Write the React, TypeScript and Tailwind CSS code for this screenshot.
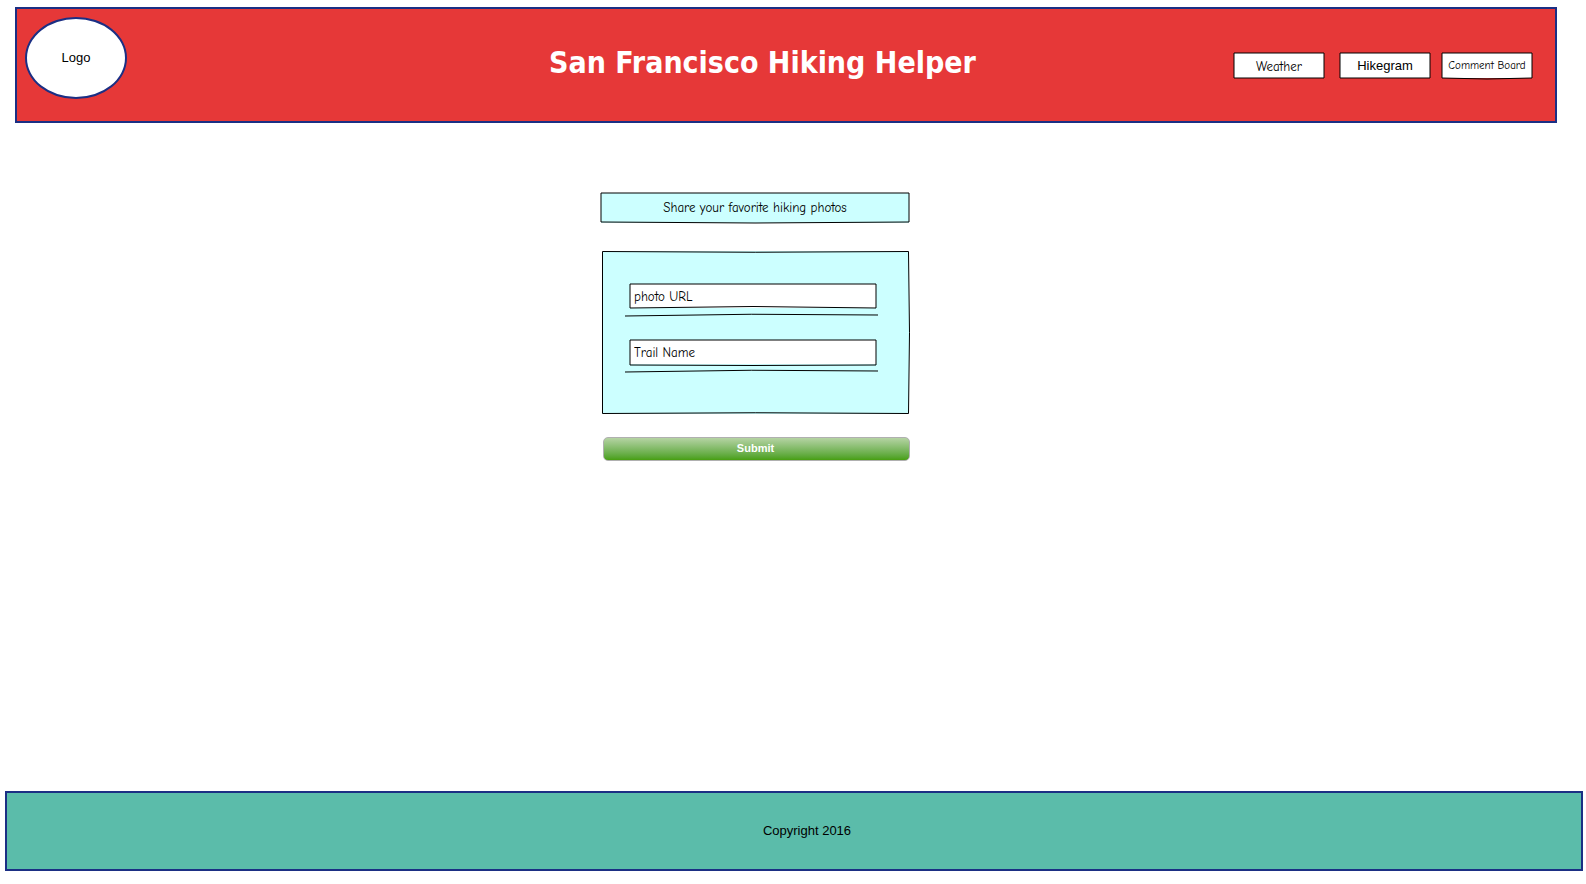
const INK = { fill: 'none', stroke: '#000', strokeWidth: 1, vectorEffect: 'non-scaling-stroke' as const };

/** Hand-drawn outline stretched over the nearest relative parent. */
function Sketch({ box, d }: { box: string; d: string }) {
  return (
    <svg
      className="pointer-events-none absolute inset-0 size-full overflow-visible"
      viewBox={box}
      preserveAspectRatio="none"
      aria-hidden="true"
    >
      <path d={d} strokeLinejoin="round" {...INK} />
    </svg>
  );
}

const comic = "font-['Comic_Sans_MS','Comic_Neue','Open_Sans',sans-serif]";

const links = [
  { label: 'Weather', style: `mr-1 pt-[2px] text-[13px] ${comic}`, d: 'M0 0H90V25H0Z' },
  { label: 'Hikegram', style: 'text-[13px]', d: 'M0 0H90V25H0Z' },
  { label: 'Comment Board', style: `pt-[2px] text-[11px] ${comic}`, d: 'M0 0H90V25Q45 27 0 25Z' },
];

const fields = [
  { id: 'photo-url', label: 'photo URL', d: 'M0 0H246V24Q123 21 0 24Z' },
  { id: 'trail-name', label: 'Trail Name', d: 'M0 0H246V25Q123 26 0 25Z' },
];

export default function App() {
  return (
    <div className="flex min-h-screen flex-col bg-white font-['Liberation_Sans',Arial,sans-serif] text-[13px] text-black">
      <header className="mt-[7px] mr-[29px] ml-[15px] flex items-start border-2 border-[#1b2f84] bg-[#e63838] pt-2 pr-[23px] pb-[22px] pl-2">
        <a
          href="#home"
          className="flex h-[82px] w-[102px] shrink-0 items-center justify-center rounded-[50%] border-2 border-[#1b2f84] bg-white"
        >
          Logo
        </a>
        <h1 className="mt-[26px] flex-1 pl-[164px] text-center font-['Tahoma','DejaVu_Sans_Condensed','DejaVu_Sans',sans-serif] text-[30px] leading-10 font-bold whitespace-nowrap text-white">
          San Francisco Hiking Helper
        </h1>
        <nav className="mt-9 flex shrink-0 gap-3">
          {links.map((link) => (
            <a
              key={link.label}
              href="#"
              className={`relative flex h-[25px] w-[90px] items-center justify-center bg-white whitespace-nowrap ${link.style}`}
            >
              {link.label}
              <Sketch box="0 0 90 25" d={link.d} />
            </a>
          ))}
        </nav>
      </header>

      <main className="flex flex-1 justify-center pt-[70px] pr-[76px] pb-10">
        <form className="w-[308px]" onSubmit={(event) => event.preventDefault()}>
          <h2 className={`relative flex h-[30px] items-center justify-center bg-[#ccffff] text-[13px] ${comic}`}>
            Share your favorite hiking photos
            <Sketch box="0 0 308 30" d="M0 0H308V29Q154 31 0 29Z" />
          </h2>

          <div className="relative mt-[28px] ml-px flex flex-col gap-6 bg-[#ccffff] px-[23px] pt-[33px] pb-[42px]">
            <Sketch box="0 0 307 163" d="M.5 .5Q153 2 306.5 .5Q308.5 82 306.5 162.5Q153 161 .5 162.5Z" />
            {fields.map((field) => (
              <div key={field.id}>
                <div className="relative mr-[10px] ml-[5px] h-6 bg-white">
                  <input
                    id={field.id}
                    type="text"
                    aria-label={field.label}
                    placeholder={field.label}
                    className={`block h-6 w-full bg-transparent px-1 text-[13px] outline-none placeholder:text-black placeholder:opacity-100 ${comic}`}
                  />
                  <Sketch box="0 0 246 24" d={field.d} />
                </div>
                <svg
                  className="mt-[6px] block h-[2px] w-[253px] overflow-visible"
                  viewBox="0 0 253 2"
                  preserveAspectRatio="none"
                  aria-hidden="true"
                >
                  <path d="M0 2Q126 -1 253 1" {...INK} />
                </svg>
              </div>
            ))}
          </div>

          <button
            type="submit"
            className="mt-[23px] ml-[2px] flex h-6 w-[307px] items-center justify-center rounded-[5px] border border-[#b0b0b0] bg-linear-to-b from-[#b5d3a3] to-[#479f0c] pr-[2px] pb-[2px] text-[11px] font-bold text-white"
          >
            Submit
          </button>
        </form>
      </main>

      <footer className="mr-[3px] mb-[13px] ml-[5px] flex h-20 items-center justify-center border-2 border-[#1b2f84] bg-[#5bbcaa] pl-[26px]">
        Copyright 2016
      </footer>
    </div>
  );
}
